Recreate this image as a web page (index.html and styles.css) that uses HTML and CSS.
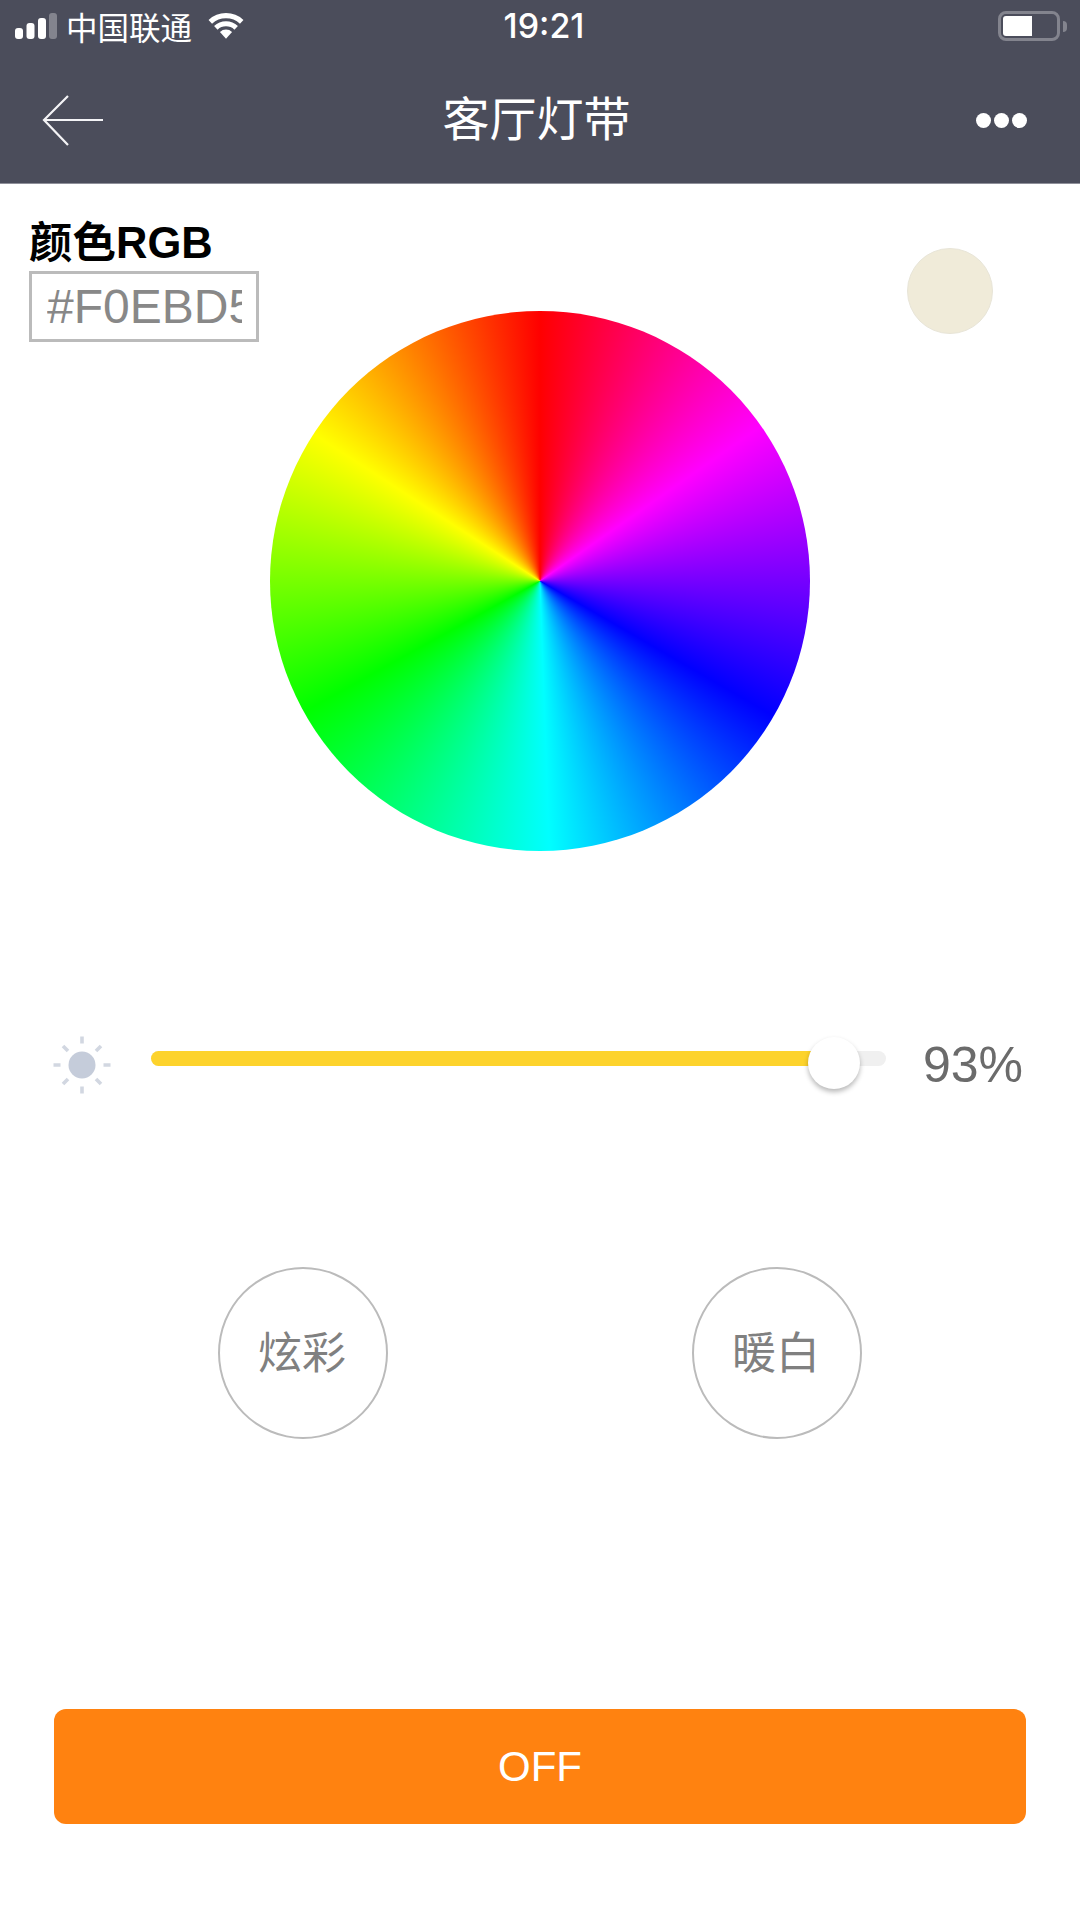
FILE: index.html
```html
<!DOCTYPE html>
<html lang="zh">
<head>
<meta charset="utf-8">
<title>客厅灯带</title>
<link rel="stylesheet" href="styles.css">
</head>
<body>
<div class="app">
  <header class="top">
    <div class="status">
      <div class="status-left">
        <svg class="signal" width="43" height="28" viewBox="0 0 43 28">
          <rect x="0" y="15" width="8" height="11" rx="3" fill="#fff"/>
          <rect x="11.5" y="10" width="8" height="16" rx="3" fill="#fff"/>
          <rect x="23" y="5" width="8" height="21" rx="3" fill="#fff"/>
          <rect x="34" y="0" width="8" height="26" rx="3" fill="#83848e"/>
        </svg>
        <span class="carrier">中国联通</span>
        <svg class="wifi" width="38" height="28" viewBox="0 0 37 27">
          <path d="M18.5 27 L12.6 20.2 A9 9 0 0 1 24.4 20.2 Z" fill="#fff"/>
          <path d="M3.2 10.4 A22.5 22.5 0 0 1 33.8 10.4" fill="none" stroke="#fff" stroke-width="5"/>
          <path d="M8.6 16.2 A14.5 14.5 0 0 1 28.4 16.2" fill="none" stroke="#fff" stroke-width="5"/>
        </svg>
      </div>
      <span class="time">19:21</span>
      <div class="battery">
        <div class="battery-body"><div class="battery-level"></div></div>
        <div class="battery-nub"></div>
      </div>
    </div>
    <nav class="nav">
      <svg class="back" width="63" height="52" viewBox="0 0 63 52">
        <path d="M62 25 H3 M27 1 L3 25 L27 50" fill="none" stroke="#f4f4f6" stroke-width="2.2"/>
      </svg>
      <h1 class="title">客厅灯带</h1>
      <div class="more"><i></i><i></i><i></i></div>
    </nav>
  </header>

  <section class="picker">
    <div class="rgb">
      <div class="rgb-label">颜色RGB</div>
      <div class="rgb-box"><div class="rgb-value">#F0EBD5</div></div>
    </div>
    <div class="wheel"></div>
    <div class="swatch"></div>
  </section>

  <section class="brightness">
    <svg class="sun" width="60" height="60" viewBox="0 0 60 60">
      <circle cx="30" cy="30" r="13.5" fill="#c5ccda"/>
      <g stroke="#d2d7e1" stroke-width="3.6">
        <path d="M30 1.5 V8.5 M30 51.5 V58.5 M1.5 30 H8.5 M51.5 30 H58.5"/>
        <path d="M11 11 L16 16 M44 44 L49 49 M49 11 L44 16 M16 44 L11 49"/>
      </g>
    </svg>
    <div class="track">
      <div class="track-fill" style="width:93%"></div>
      <div class="thumb" style="left:93%"></div>
    </div>
    <div class="percent">93%</div>
  </section>

  <section class="modes">
    <button class="mode">炫彩</button>
    <button class="mode">暖白</button>
  </section>

  <button class="power">OFF</button>
</div>
</body>
</html>
```

FILE: styles.css
```css
* { box-sizing: border-box; }
html, body { margin: 0; padding: 0; background: #fff; }
body { font-family: "Liberation Sans", "Noto Sans CJK SC", sans-serif; }
.app { width: 1080px; height: 1920px; display: flex; flex-direction: column; overflow: hidden; }

.top { height: 184px; background: #4b4d5b; color: #fff; display: flex; flex-direction: column; border-bottom: 1px solid #8f909a; }
.status { height: 52px; display: grid; grid-template-columns: 1fr auto 1fr; align-items: center; padding: 0 13px 0 15px; }
.status-left { display: flex; align-items: center; }
.signal { margin-top: 2px; }
.carrier { margin-left: 8px; font-size: 31.5px; line-height: 36px; font-family: "Noto Sans CJK SC", sans-serif; }
.wifi { margin-left: 15px; margin-top: -2px; }
.time { font-family: Inter, "Liberation Sans", sans-serif; font-weight: 500; font-size: 34px; line-height: 40px; margin-left: 6px; }
.battery { display: flex; align-items: center; justify-self: end; }
.battery-body { width: 62px; height: 30px; border: 3px solid #83848e; border-radius: 8px; padding: 2px; }
.battery-level { width: 29px; height: 100%; background: #fff; border-radius: 3px 0 0 3px; }
.battery-nub { width: 4px; height: 11px; margin-left: 3px; background: #83848e; border-radius: 0 4px 4px 0; }

.nav { flex: 1; display: grid; grid-template-columns: 1fr auto 1fr; align-items: center; padding: 6px 53px 0 41px; }
.back { display: block; }
.title { margin: 0 0 10px 5px; font-size: 47px; font-weight: 400; font-family: "Noto Sans CJK SC", sans-serif; line-height: 60px; }
.more { display: flex; gap: 3px; justify-self: end; }
.more i { width: 15px; height: 15px; border-radius: 50%; background: #fff; }

.picker { display: grid; grid-template-columns: 270px 540px 270px; align-items: start; }
.rgb { padding: 33px 0 0 29px; }
.rgb-label { font-size: 43.5px; line-height: 52px; font-weight: 700; color: #000; font-family: "Liberation Sans", "Noto Sans CJK SC", sans-serif; }
.rgb-box { width: 230px; height: 71px; margin-top: 2px; border: 3px solid #bbb; padding: 0 14px 0 15px; }
.rgb-value { height: 100%; overflow: hidden; white-space: nowrap; font-size: 48px; line-height: 65px; color: #888; }
.wheel { width: 540px; height: 540px; margin-top: 127px; border-radius: 50%; background: conic-gradient(#f00 0deg, #f0f 55deg, #00f 120deg, #0ff 178deg, #0f0 241deg, #ff0 303deg, #f00 360deg); }
.swatch { width: 86px; height: 86px; margin: 64px 0 0 97px; border-radius: 50%; background: #f0ebd9; border: 1px solid #e8e5d8; }

.brightness { display: flex; align-items: center; height: 60px; margin-top: 184px; padding-left: 52px; }
.track { position: relative; width: 735px; height: 15px; margin: 0 0 13px 39px; background: #f0f0f0; border-radius: 8px; }
.track-fill { height: 100%; background: #fdd32c; border-radius: 8px; }
.thumb { position: absolute; top: -14px; width: 52px; height: 52px; margin-left: -27px; border-radius: 50%; background: #fff; box-shadow: 0 3px 5px rgba(0,0,0,.28); }
.percent { margin-left: 37px; font-size: 50px; color: #6b6b6b; line-height: 60px; }

.modes { display: flex; gap: 304px; margin-top: 172px; padding-left: 218px; }
.mode { width: 170px; height: 172px; padding: 0 2px 7px 0; background: #fff; border: 2px solid #bbb; border-radius: 50%; font-size: 44px; color: #808080; font-family: "Noto Sans CJK SC", sans-serif; }

.power { width: 972px; height: 115px; margin: 270px 0 0 54px; background: #ff8210; color: #fff; border: 0; border-radius: 12px; font-size: 42px; font-family: "Liberation Sans", sans-serif; padding: 0; }
```
